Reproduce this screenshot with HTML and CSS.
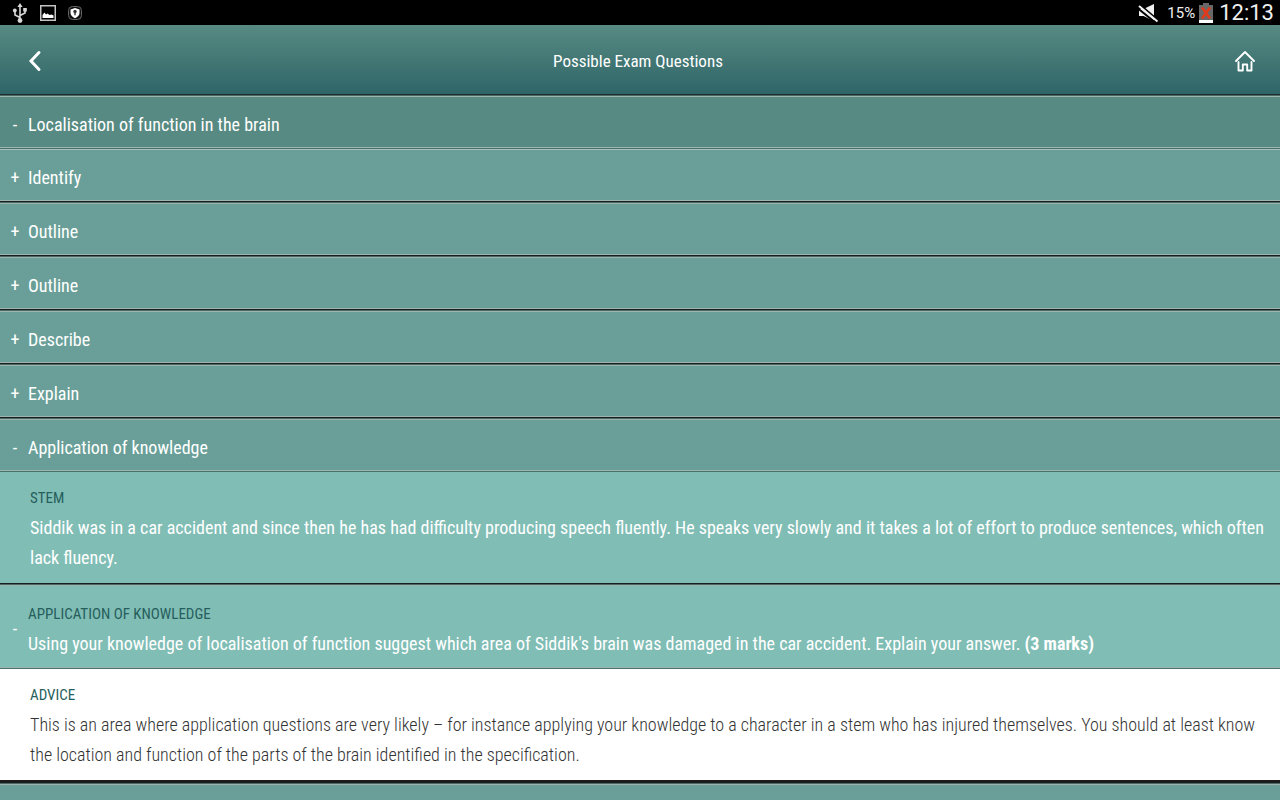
FILE: index.html
```html
<!DOCTYPE html>
<html lang="en">

<head>
  <meta charset="UTF-8">
  <meta name="viewport" content="width=device-width, initial-scale=1">
  <title>Possible Exam Questions</title>
  <link rel="stylesheet" href="styles.css">
</head>

<body>
  <div class="status_bar">
    <div class="status_left">
      <svg width="16" height="20" viewBox="0 0 16 20" fill="none" stroke="#d8d8d8" stroke-width="1.6">
        <path d="M8 3v14M8 14.5L3 12V8M8 12.5l5-2.500V6.500" />
        <path d="M8 0l2.600 4H5.400z" fill="#d8d8d8" stroke="none" />
        <circle cx="8" cy="17.500" r="2.400" fill="#d8d8d8" stroke="none" />
        <circle cx="2.800" cy="7.500" r="1.900" fill="#d8d8d8" stroke="none" />
        <path d="M11.200 5h3.600v3.600h-3.600z" fill="#d8d8d8" stroke="none" />
      </svg>
      <svg width="16" height="16" viewBox="0 0 16 16">
        <rect x="0.750" y="0.750" width="14.500" height="14.500" fill="none" stroke="#c4c4c4" stroke-width="1.500" />
        <path d="M2.500 13V10l2-2.500 1.500 2 1.500-1 2 1.500 2-.5 2 1V13z" fill="#fff" />
      </svg>
      <svg width="14" height="14" viewBox="0 0 14 14">
        <rect x="0.500" y="0.500" width="13" height="13" rx="4" fill="#111" stroke="#666" />
        <path d="M7 2l4.500 1.500V7c0 2.500-2 4-4.500 5.200C4.500 11 2.500 9.500 2.500 7V3.500z" fill="#fff" />
        <circle cx="7" cy="5.500" r="1.700" fill="#333" />
        <path d="M6.300 6h1.400v3.200H6.300z" fill="#333" />
      </svg>
    </div>
    <div class="status_right">
      <svg width="21" height="20" viewBox="0 0 21 20">
        <path d="M1 6h4.500L16 1v17L5.500 13H1z" fill="#f0f0f0" />
        <path d="M0 0L18 15.500M0 5.500L18 20" stroke="#000" stroke-width="2" />
        <path d="M1 3l18.500 15.500" stroke="#f0f0f0" stroke-width="2" />
      </svg>
      <span class="battery_level">15%</span>
      <svg width="14" height="20" viewBox="0 0 14 20">
        <path d="M4 0h6v2h4v18H0V2h4z" fill="#686868" />
        <path d="M0 17h14v3H0z" fill="#fff" />
        <path d="M3 4.500l8 11M11 4.500l-8 11" stroke="#e23a1a" stroke-width="2.600" />
      </svg>
      <span class="clock">12:13</span>
    </div>
  </div>

  <header class="header">
    <a class="header_link" href="#back" aria-label="Back">
      <svg width="16" height="22" viewBox="0 0 16 22" fill="none" stroke="#fff" stroke-width="3" stroke-linecap="round">
        <path d="M12 2.500L4 11l8 8.500" />
      </svg>
    </a>
    <h1 class="header_title">Possible Exam Questions</h1>
    <a class="header_link" href="#home" aria-label="Home">
      <svg width="20" height="22" viewBox="0 0 20 22" fill="none" stroke="#fff" stroke-width="1.900" stroke-linejoin="round" stroke-linecap="round">
        <path d="M1 11l9-9 9 9" />
        <path d="M3.500 12v8.500h4.300V14.500h4.400v6h4.300V12" />
      </svg>
    </a>
  </header>

  <main>
    <button class="row row_topic" aria-expanded="true"><span class="sign">-</span>Localisation of function in the brain</button>
    <div class="questions">
      <button class="row row_first" aria-expanded="false"><span class="sign">+</span>Identify</button>
      <button class="row" aria-expanded="false"><span class="sign">+</span>Outline</button>
      <button class="row" aria-expanded="false"><span class="sign">+</span>Outline</button>
      <button class="row" aria-expanded="false"><span class="sign">+</span>Describe</button>
      <button class="row" aria-expanded="false"><span class="sign">+</span>Explain</button>
      <button class="row row_open" aria-expanded="true"><span class="sign">-</span>Application of knowledge</button>
      <div class="answer">
        <section class="panel panel_stem">
          <h2 class="label">STEM</h2>
          <p>Siddik was in a car accident and since then he has had difficulty producing speech fluently. He speaks very slowly and it takes a lot of effort to produce sentences, which often lack fluency.</p>
        </section>
        <button class="row row_question" aria-expanded="true">
          <span class="sign">-</span>
          <span class="question">
            <span class="label">APPLICATION OF KNOWLEDGE</span>
            <span>Using your knowledge of localisation of function suggest which area of Siddik's brain was damaged in the car accident. Explain your answer. <b>(3 marks)</b></span>
          </span>
        </button>
        <section class="panel panel_advice">
          <h2 class="label">ADVICE</h2>
          <p>This is an area where application questions are very likely – for instance applying your knowledge to a character in a stem who has injured themselves. You should at least know the location and function of the parts of the brain identified in the specification.</p>
        </section>
      </div>
    </div>
    <div class="list_end"></div>
  </main>

  <script>
    document.querySelectorAll('.row').forEach(row => {
      row.addEventListener('click', () => {
        const open = row.getAttribute('aria-expanded') !== 'true';
        const content = row.nextElementSibling;
        row.setAttribute('aria-expanded', open);
        row.querySelector('.sign').textContent = open ? '-' : '+';
        if (content && !content.classList.contains('row')) {
          content.hidden = !open;
        }
      });
    });
  </script>
</body>

</html>
```
FILE: styles.css
```css
* {
  box-sizing: border-box;
}

body {
  margin: 0;
  min-height: 100vh;
  background-color: #699f98;
  color: #fff;
  font-family: "Ubuntu Condensed", "Roboto Condensed", sans-serif;
  font-size: 18px;
  line-height: 30px;
}

h1,
h2,
p {
  margin: 0;
  font-weight: normal;
}

svg {
  display: block;
}

.status_bar {
  display: flex;
  justify-content: space-between;
  align-items: center;
  height: 25px;
  padding: 0 6px 0 12px;
  background-color: #000;
  color: #f0f0f0;
  font-family: Roboto, sans-serif;
}

.status_left,
.status_right {
  display: flex;
  align-items: center;
}

.status_left {
  gap: 12px;
}

.status_right {
  gap: 4px;
}

.battery_level {
  margin-left: 4px;
  font-size: 15px;
}

.clock {
  margin-left: 2px;
  font-size: 22px;
}

.header {
  display: flex;
  justify-content: space-between;
  align-items: center;
  height: 70px;
  padding: 3px 24px 0;
  border-bottom: 1px solid #1f2b2e;
  background: linear-gradient(#578a82, #2e6568);
}

.header_link {
  padding: 0 1px 0 3px;
}

.header_title {
  font-size: 17px;
}

.row {
  display: flex;
  align-items: center;
  width: 100%;
  min-height: 54px;
  padding: 5px 10px 0;
  border: 0;
  border-top: 1px solid #4c6864;
  border-bottom: 1px solid #17201f;
  background-color: #699f98;
  box-shadow: inset 0 1px #9cb5b1, inset 0 -1px #9cb5b1;
  color: #fff;
  font: inherit;
  text-align: left;
  cursor: pointer;
}

.row_topic {
  background-color: #578a82;
  border-bottom-color: #48716c;
}

.row_first {
  min-height: 53px;
  border-top-color: #a9c0bc;
  box-shadow: inset 0 -1px #9cb5b1;
}

.row_open {
  border-bottom-color: #48716c;
}

.sign {
  flex: none;
  width: 10px;
  margin-right: 8px;
  text-align: center;
}

.label {
  display: block;
  color: #265e5c;
  font-size: 15px;
}

.panel {
  padding: 11px 10px 10px 30px;
}

.panel_stem {
  background-color: #80bdb5;
  border-bottom: 1px solid #17201f;
}

.row_question {
  padding: 14px 10px 9px;
  background-color: #80bdb5;
  border-bottom-color: #48716c;
}

.panel_advice {
  background-color: #fff;
  border-bottom: 3px solid #1c1c1c;
  color: #333;
}

.panel_advice p {
  font-weight: 300;
}

.list_end {
  height: 17px;
  border-top: 1px solid #4c6864;
  box-shadow: inset 0 1px #9cb5b1;
}
```
